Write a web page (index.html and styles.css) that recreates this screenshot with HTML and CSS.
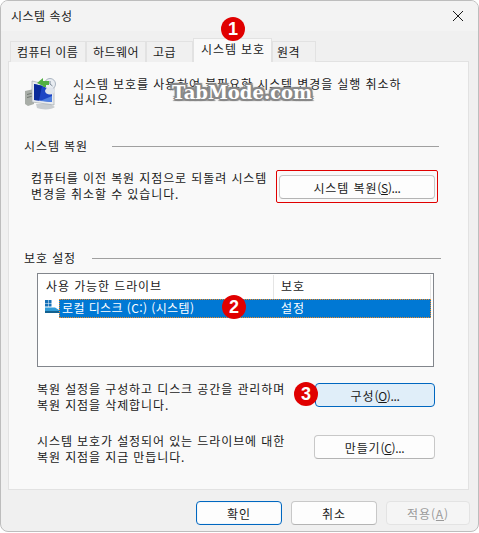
FILE: index.html
```html
<!DOCTYPE html>
<html lang="ko">
<head>
  <meta charset="UTF-8" />
  <title>시스템 속성</title>
  <link rel="stylesheet" href="styles.css">
</head>
<body>

  <div class="window">
    <div class="titlebar">
      <span>시스템 속성</span>
      <svg class="close-icon" width="10" height="10" viewBox="0 0 10 10">
        <path d="M0 0L10 10M10 0L0 10" stroke="#1a1a1a" stroke-width="1" fill="none" />
      </svg>
    </div>

    <div class="tabs">
      <div class="tab tab-name">컴퓨터 이름</div>
      <div class="tab tab-hw">하드웨어</div>
      <div class="tab tab-adv">고급</div>
      <div class="tab tab-active">시스템 보호</div>
      <div class="tab tab-remote">원격</div>
    </div>

    <div class="panel">
      <div class="intro">
        <svg class="intro-icon" width="32" height="33" viewBox="0 0 32 33">
          <path d="M1 14l9-2v15l-6 2-3-2z" fill="#a9aea8" />
          <path d="M3 17l5-1.200v1l-5 1.200zM3 20l5-1.200v1l-5 1.200z" fill="#6f756f" />
          <path d="M12 27h14l5 3c-3 3-13 3-18 1z" fill="#c9cdd0" />
          <path d="M8 4l22 5v19l-22-3z" fill="#e8ebee" stroke="#a4aab0" stroke-width="0.7" />
          <path d="M10 7l18 4v14l-18-2z" fill="#1d45c4" />
          <path d="M10 7l8 1.800-3 14.800-5-.6z" fill="#0a2a9a" />
          <path d="M16 24l12 1v-6z" fill="#4f7fe0" />
          <circle cx="26" cy="7" r="5.500" fill="#e9edf2" stroke="#aab4c0" />
          <path d="M26 4v3l2.500 2" stroke="#7d8a99" fill="none" />
          <ellipse cx="26" cy="14" rx="5" ry="3.500" fill="#dfe4ec" />
          <path d="M13 6l6-5v3h6v4h-3v2h-3v-1z" fill="#52b043" />
        </svg>
        <p class="intro-text">시스템 보호를 사용하여 불필요한 시스템 변경을 실행 취소하<br>십시오.</p>
      </div>

      <div class="group-title group-restore"><span>시스템 복원</span><i></i></div>
      <div class="row row-restore">
        <p>컴퓨터를 이전 복원 지점으로 되돌려 시스템<br>변경을 취소할 수 있습니다.</p>
        <div class="red-frame">
          <button class="btn btn-restore">시스템 복원<span class="key">(<u>S</u>)...</span></button>
        </div>
      </div>

      <div class="group-title group-protect"><span>보호 설정</span><i></i></div>
      <div class="drive-list">
        <div class="list-head">
          <div class="col-drive">사용 가능한 드라이브</div>
          <div class="col-state">보호</div>
        </div>
        <div class="list-row">
          <svg class="drive-icon" width="16" height="13" viewBox="0 0 16 13">
            <path d="M1 0h3v3H1zM4.500 0h3v3h-3zM1 3.500h3v3H1zM4.500 3.500h3v3h-3z" fill="#1570b8" />
            <path d="M1 7.500h10l4 2.500v1H1z" fill="#2f9bd8" />
            <path d="M1 11h15v2H1z" fill="#14618f" />
          </svg>
          <div class="row-selected">
            <div class="col-drive-cell">로컬 디스크 (C:) (시스템)</div>
            <div class="col-state-cell">설정</div>
          </div>
        </div>
      </div>

      <div class="row row-config">
        <p>복원 설정을 구성하고 디스크 공간을 관리하며<br>복원 지점을 삭제합니다.</p>
        <button class="btn btn-config">구성<span class="key">(<u>O</u>)...</span></button>
      </div>
      <div class="row row-create">
        <p>시스템 보호가 설정되어 있는 드라이브에 대한<br>복원 지점을 지금 만듭니다.</p>
        <button class="btn btn-create">만들기<span class="key">(<u>C</u>)...</span></button>
      </div>
    </div>

    <div class="footer">
      <button class="btn btn-foot btn-ok">확인</button>
      <button class="btn btn-foot">취소</button>
      <button class="btn btn-foot btn-disabled">적용<span class="key-wide">(<u>A</u>)</span></button>
    </div>

    <div class="badge badge-1">1</div>
    <div class="badge badge-2">2</div>
    <div class="badge badge-3">3</div>
    <div class="watermark">TabMode.com</div>
  </div>

</body>
</html>
```

FILE: styles.css
```css
* {
  box-sizing: border-box;
  font-family: 'Noto Sans CJK KR', 'Noto Sans', sans-serif;
}

body {
  margin: 0;
  background: #ffffff;
}

p {
  margin: 0;
}

.window {
  position: relative;
  width: 479px;
  height: 532px;
  background: #f0f0f0;
  border: 1px solid #bdbdbd;
  border-radius: 8px;
  font-size: 12px;
  line-height: 16px;
  color: #1a1a1a;
  letter-spacing: 0.9px;
  overflow: hidden;
}

.titlebar {
  height: 30px;
  padding: 0 10px;
  background: #f3f3f3;
  display: flex;
  align-items: center;
  justify-content: space-between;
  letter-spacing: 0.5px;
}

.close-icon {
  margin-right: 5px;
}

.tabs {
  height: 30px;
  padding: 8px 0 0 9px;
  display: flex;
  align-items: flex-end;
  position: relative;
  z-index: 1;
}

.tab {
  height: 21px;
  margin-bottom: -1px;
  padding-left: 6px;
  background: #f0f0f0;
  border: 1px solid #e2e2e2;
  border-bottom: none;
  line-height: 19px;
  letter-spacing: 0.45px;
  white-space: nowrap;
}

.tab-name { width: 76px; }
.tab-hw { width: 60px; }
.tab-adv { width: 47px; }
.tab-remote { width: 44px; padding-left: 4px; }

.tab-active {
  width: 79px;
  height: 24px;
  padding-left: 7px;
  background: #f9f9f9;
  line-height: 19px;
  letter-spacing: 0.9px;
}

.panel {
  width: 461px;
  height: 429px;
  margin-left: 7px;
  padding: 14px 29px 0 15px;
  background: #f9f9f9;
  border: 1px solid #e2e2e2;
}

.intro {
  display: flex;
  gap: 17px;
  height: 47px;
}

.intro-icon {
  margin-top: 1px;
  flex: none;
}

.intro-text {
  line-height: 15px;
}

.group-title {
  display: flex;
  align-items: center;
}

.group-title i {
  flex: 1;
  height: 1px;
  background: #a0a0a0;
}

.group-restore {
  margin-top: 15px;
}

.group-restore i {
  margin-left: 24px;
}

.group-protect {
  margin-top: 47px;
}

.group-protect i {
  margin-left: 16px;
  margin-right: -2px;
}

.row {
  display: flex;
  justify-content: space-between;
}

.row-restore {
  margin-top: 16px;
  padding-left: 7px;
  margin-right: 1px;
  height: 33px;
}

.red-frame {
  width: 162px;
  height: 33px;
  padding: 4px 2px;
  border: 1px solid #e00000;
  border-radius: 2px;
  display: flex;
}

.btn {
  height: 24px;
  padding: 0;
  background: #fdfdfd;
  border: 1px solid #c8c8c8;
  border-bottom-color: #b4b4b4;
  border-radius: 4px;
  font-size: 12px;
  color: #1a1a1a;
  letter-spacing: 0.9px;
}

.key {
  letter-spacing: -0.35px;
}

.key-wide {
  letter-spacing: 0.9px;
}

.btn-restore {
  width: 100%;
  height: 24px;
}

.drive-list {
  width: 397px;
  height: 94px;
  margin: 7px 0 0 13px;
  background: #ffffff;
  border: 1px solid #82868c;
  padding: 1px 2px 0 1px;
}

.list-head {
  display: flex;
  height: 24px;
  line-height: 22px;
}

.col-drive {
  width: 235px;
  padding-left: 7px;
  border-right: 1px solid #e5e5e5;
}

.col-state {
  padding-left: 7px;
  border-right: 1px solid #e5e5e5;
  flex: 1;
}

.list-row {
  display: flex;
  height: 19px;
}

.drive-icon {
  margin: 1px -1px 0 5px;
  flex: none;
}

.row-selected {
  flex: 1;
  display: flex;
  background: #0078d4;
  color: #ffffff;
  outline: 1px dotted #f08a24;
  outline-offset: -1px;
  line-height: 18px;
  letter-spacing: 0.4px;
}

.col-drive-cell {
  width: 215px;
  padding-left: 3px;
}

.col-state-cell {
  padding-left: 7px;
  letter-spacing: 0.9px;
}

.row-config {
  margin: 14px 4px 0 0;
  padding-left: 13px;
  align-items: flex-start;
  height: 32px;
}

.row-config .btn {
  margin-top: 2px;
}

.row-create {
  margin: 20px 4px 0 0;
  padding-left: 13px;
  align-items: flex-start;
  height: 32px;
}

.row-create .btn {
  margin-top: 2px;
}

.btn-config {
  width: 120px;
  background: #e0eef9;
  border-color: #0067c0;
}

.btn-create {
  width: 121px;
}

.footer {
  display: flex;
  justify-content: flex-end;
  gap: 9px;
  padding: 11px 8px 0 0;
}

.btn-foot {
  width: 86px;
}

.btn-ok {
  border-color: #0067c0;
  box-shadow: inset 0 0 0 1px #f0f6fb;
}

.btn-disabled {
  width: 84px;
  background: #f5f5f5;
  border-color: #e3e3e3;
  color: #9a9a9a;
}

.badge {
  position: absolute;
  width: 24px;
  height: 24px;
  border-radius: 50%;
  background: #e00000;
  color: #ffffff;
  font-family: 'Liberation Sans', sans-serif;
  font-size: 18px;
  font-weight: bold;
  line-height: 24px;
  text-align: center;
  letter-spacing: 0;
  z-index: 2;
}

.badge-1 { left: 220px; top: 16px; }
.badge-2 { left: 221px; top: 294px; }
.badge-3 { left: 293px; top: 381px; }

.watermark {
  position: absolute;
  left: 171px;
  top: 81px;
  font-family: 'DejaVu Serif', serif;
  font-size: 18px;
  font-weight: bold;
  letter-spacing: 0;
  line-height: 22px;
  color: #ffffff;
  text-shadow: 1px 1px 0 #888, -1px -1px 0 #888, 1px -1px 0 #888, -1px 1px 0 #888, 2px 0 0 #888, -2px 0 0 #888, 0 2px 0 #888, 0 -2px 0 #888, 2px 2px 1px #888, -2px 2px 1px #888, 2px -2px 1px #888, -2px -2px 1px #888;
  z-index: 2;
}
```
